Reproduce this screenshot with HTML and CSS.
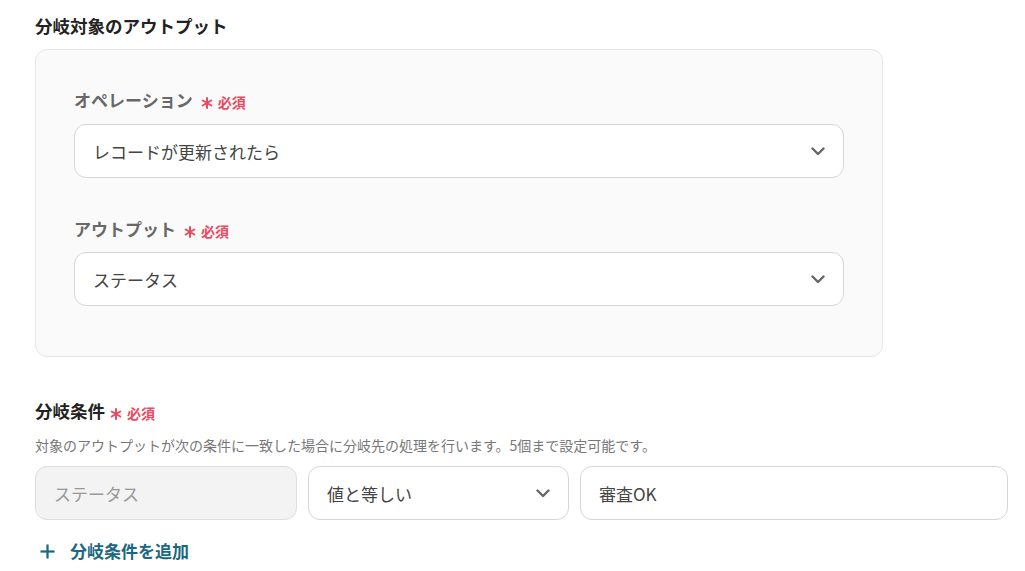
FILE: index.html
```html
<!DOCTYPE html>
<html lang="ja">
<head>
<meta charset="utf-8">
<link rel="stylesheet" href="styles.css">
</head>
<body>
<div class="page">
  <h2 class="section-title">分岐対象のアウトプット</h2>
  <div class="panel">
    <div class="field">
      <div class="label">オペレーション<span class="req"><svg class="ast" viewBox="0 0 12 12"><g stroke="currentColor" stroke-width="2" stroke-linecap="round"><line x1="6" y1="1" x2="6" y2="11"/><line x1="1.7" y1="3.5" x2="10.3" y2="8.5"/><line x1="1.7" y1="8.5" x2="10.3" y2="3.5"/></g></svg>必須</span></div>
      <div class="select"><span>レコードが更新されたら</span><svg class="chev" viewBox="0 0 14 9"><polyline points="1.5,1.5 7,7 12.5,1.5" fill="none" stroke="currentColor" stroke-width="2.4" stroke-linecap="round" stroke-linejoin="round"/></svg></div>
    </div>
    <div class="field">
      <div class="label">アウトプット<span class="req"><svg class="ast" viewBox="0 0 12 12"><g stroke="currentColor" stroke-width="2" stroke-linecap="round"><line x1="6" y1="1" x2="6" y2="11"/><line x1="1.7" y1="3.5" x2="10.3" y2="8.5"/><line x1="1.7" y1="8.5" x2="10.3" y2="3.5"/></g></svg>必須</span></div>
      <div class="select"><span>ステータス</span><svg class="chev" viewBox="0 0 14 9"><polyline points="1.5,1.5 7,7 12.5,1.5" fill="none" stroke="currentColor" stroke-width="2.4" stroke-linecap="round" stroke-linejoin="round"/></svg></div>
    </div>
  </div>

  <div class="cond">
    <h2 class="section-title">分岐条件<span class="req"><svg class="ast" viewBox="0 0 12 12"><g stroke="currentColor" stroke-width="2" stroke-linecap="round"><line x1="6" y1="1" x2="6" y2="11"/><line x1="1.7" y1="3.5" x2="10.3" y2="8.5"/><line x1="1.7" y1="8.5" x2="10.3" y2="3.5"/></g></svg>必須</span></h2>
    <p class="desc">対象のアウトプットが次の条件に一致した場合に分岐先の処理を行います。5個まで設定可能です。</p>
    <div class="row">
      <div class="box box-disabled">ステータス</div>
      <div class="box box-select"><span>値と等しい</span><svg class="chev" viewBox="0 0 14 9"><polyline points="1.5,1.5 7,7 12.5,1.5" fill="none" stroke="currentColor" stroke-width="2.4" stroke-linecap="round" stroke-linejoin="round"/></svg></div>
      <div class="box box-input">審査OK</div>
    </div>
    <div class="add"><svg class="plus" viewBox="0 0 16 16"><g stroke="currentColor" stroke-width="2.4"><line x1="8" y1="0.5" x2="8" y2="15.5"/><line x1="0.5" y1="8" x2="15.5" y2="8"/></g></svg><span>分岐条件を追加</span></div>
  </div>
</div>
</body>
</html>
```
FILE: styles.css
```css
* { box-sizing: border-box; }
html, body { margin: 0; padding: 0; background: #ffffff; }
body {
  font-family: "Noto Sans CJK JP", "Noto Sans", "Liberation Sans", sans-serif;
  color: #333;
}
.page {
  padding: 14px 0 0 35px;
}
.section-title {
  margin: 0;
  font-size: 17.5px;
  line-height: 24px;
  font-weight: 700;
  color: #222;
  display: flex;
  align-items: center;
}
.panel {
  margin-top: 11px;
  width: 848px;
  background: #fafafa;
  border: 1px solid #e6e6e6;
  border-radius: 12px;
  padding: 38px 38px 50px 38px;
  display: flex;
  flex-direction: column;
  gap: 39px;
}
.field {
  display: flex;
  flex-direction: column;
  gap: 12px;
}
.field + .field { gap: 11px; }
.label {
  display: flex;
  align-items: center;
  font-size: 17px;
  line-height: 24px;
  font-weight: 700;
  color: #686868;
}
.req {
  display: inline-flex;
  align-items: center;
  margin-left: 8px;
  color: #ea4a61;
  font-size: 14px;
  font-weight: 700;
  line-height: 20px;
  padding-top: 3px;
}
.ast {
  width: 12px;
  height: 12px;
  margin-right: 5px;
  margin-top: 3px;
}
.select {
  height: 54px;
  background: #fff;
  border: 1px solid #d3d6dc;
  border-radius: 12px;
  padding: 0 18px 0 18px;
  display: flex;
  align-items: center;
  justify-content: space-between;
  font-size: 17px;
  color: #444;
}
.chev {
  width: 14px;
  height: 9px;
  color: #666;
}
.cond {
  margin-top: 42px;
}
.cond .section-title .req { margin-left: 5px; }
.desc {
  margin: 12px 0 0 0;
  font-size: 14px;
  line-height: 20px;
  color: #777;
}
.row {
  margin-top: 11px;
  display: flex;
  gap: 11px;
}
.box {
  height: 54px;
  border: 1px solid #d3d6dc;
  border-radius: 12px;
  padding: 0 18px 0 18px;
  display: flex;
  align-items: center;
  font-size: 17px;
  color: #444;
  background: #fff;
}
.box-disabled {
  width: 262px;
  background: #f3f3f3;
  border-color: #dedede;
  color: #999;
}
.box-select {
  width: 261px;
  justify-content: space-between;
}
.box-input {
  width: 428px;
}
.add {
  margin-top: 19px;
  display: flex;
  align-items: center;
  color: #1b6882;
  font-size: 17px;
  line-height: 24px;
  font-weight: 700;
  padding-left: 5px;
}
.plus {
  width: 15px;
  height: 15px;
  margin-right: 15px;
}
```
